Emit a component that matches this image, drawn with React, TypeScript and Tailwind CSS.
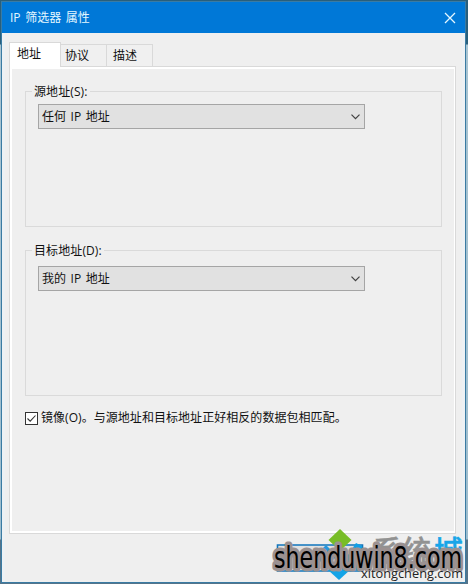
import type { ReactNode } from 'react'
import clsx from 'clsx'

const TABS = [
  { label: '地址', width: 'w-[52px]' },
  { label: '协议', width: 'w-[46px]' },
  { label: '描述', width: 'w-[46px]' },
]

function TitleBar() {
  return (
    <div className="flex h-[31px] shrink-0 items-center justify-between bg-[#0078d7] pr-[9px] pl-[8px] text-[#e4f7ff]">
      <span className="whitespace-pre">IP 筛选器 属性</span>
      <svg width="12" height="12" viewBox="0 0 12 12" stroke="currentColor" strokeWidth="1.3">
        <path d="M1 1L11 11M11 1L1 11" />
      </svg>
    </div>
  )
}

function Tabs() {
  return (
    <div className="flex h-[24px] items-end">
      {TABS.map((tab, i) => (
        <button
          key={tab.label}
          className={clsx(
            'shrink-0 border border-b-0 border-[#d9d9d9] text-left',
            tab.width,
            i === 0 && 'relative z-10 -mb-px h-[25px] bg-[#fff] pb-[2px] pl-[7px]',
            i === 1 && 'h-[22px] border-l-0 bg-[#f0f0f0] pl-[4px]',
            i === 2 && 'h-[22px] border-l-0 bg-[#f0f0f0] pl-[6px]',
          )}
        >
          {tab.label}
        </button>
      ))}
    </div>
  )
}

function Select({ value }: { value: string }) {
  return (
    <button className="flex h-[25px] w-[327px] items-center justify-between border border-[#a5a5a5] bg-[#e1e1e1] pr-[4px] pl-[3px]">
      <span className="[word-spacing:1.5px]">{value}</span>
      <svg width="9" height="6" viewBox="0 0 9 6" fill="none" stroke="#404040" strokeWidth="1.2">
        <path d="M0.5 0.7L4.5 4.7L8.5 0.7" />
      </svg>
    </button>
  )
}

function Group({ label, className, children }: { label: string; className: string; children: ReactNode }) {
  return (
    <section className={clsx('border border-[#dadada] px-[12px]', className)}>
      <div className="-mt-[8px] -ml-[6px] h-[16px] w-fit bg-[#efefef] px-[2px] leading-[16px] tracking-[0.1px]">
        {label}
      </div>
      {children}
    </section>
  )
}

// Site logo and domain stamped over the button row
function Watermark() {
  return (
    <svg className="absolute top-[524px] left-[268px]" width="200" height="60" viewBox="268 524 200 60">
      <path d="M277.5 571V545H362.5V571Z" fill="#e1e1e1" stroke="#1175bd" strokeWidth="1.6" />
      <path d="M326 545L337 556L326 567L315 556Z" fill="#2597dc" />
      <path d="M356 543L362 546V570H338Z" fill="#10a0e6" />
      <path d="M340 529L351.5 540L340 551L328.5 540Z" fill="#78bd27" />
      <path d="M339 559L350 570L339 580L328 570Z" fill="#13a4e7" />
      <g fontFamily='"Noto Sans CJK SC", sans-serif' fontWeight="500" fontSize="29">
        <text x="373" y="562" fill="#929292" stroke="#929292" strokeWidth="0.5">
          系统
        </text>
        <text x="434" y="562" fill="#18a5e8" stroke="#18a5e8" strokeWidth="0.5">
          城
        </text>
      </g>
      <text
        x="274"
        y="568"
        fontFamily='"DejaVu Sans Condensed", "DejaVu Sans", sans-serif'
        fontSize="30"
        textLength="188"
        lengthAdjust="spacingAndGlyphs"
        fill="#000"
        stroke="#9b9191"
        strokeWidth="7"
        strokeLinejoin="round"
        paintOrder="stroke"
      >
        shenduwin8.com
      </text>
      <text
        x="361"
        y="578"
        fontFamily='"Open Sans", sans-serif'
        fontSize="13"
        textLength="102"
        lengthAdjust="spacingAndGlyphs"
        fill="#222"
      >
        xitongcheng.com
      </text>
    </svg>
  )
}

export default function App() {
  return (
    <div className="relative flex h-[584px] w-[468px] flex-col overflow-hidden bg-[linear-gradient(#285f7c_44px,#a8c4d2_45px,#9dbdce_539px,#54748a_540px)] pt-[1px] pr-[2px] pb-[1px] pl-[1px] font-['Open_Sans','Noto_Sans_CJK_SC',sans-serif] text-[12px] leading-[18px] text-[#111] [word-spacing:1.5px]">
      <div className="flex min-h-0 flex-1 flex-col border border-[#3a7ba3] bg-[#efefef]">
        <TitleBar />
        <div className="flex flex-1 flex-col border-x-[3px] border-[#edf1f4] pt-[9px] pr-[6px] pl-[4px]">
          <Tabs />
          <div className="h-[468px] border border-[#d9d9d9]">
            <div className="h-full border-2 border-r-[1px] border-white pt-[22px] pr-[12px] pl-[13px]">
              <Group label="源地址(S):" className="h-[136px]">
                <div className="mt-[4px]">
                  <Select value="任何 IP 地址" />
                </div>
              </Group>
              <Group label="目标地址(D):" className="mt-[23px] h-[146px]">
                <div className="mt-[7px]">
                  <Select value="我的 IP 地址" />
                </div>
              </Group>
              <label className="mt-[12px] flex h-[19px] items-start whitespace-nowrap">
                <span className="mt-[4px] mr-[3px] flex h-[13px] w-[13px] shrink-0 items-center justify-center border border-[#333] bg-white">
                  <svg width="11" height="11" viewBox="0 0 11 11" fill="none" stroke="#333" strokeWidth="1.1">
                    <path d="M1.5 5.5L4.2 8.2L9.5 2.5" />
                  </svg>
                </span>
                <span className="pt-px tracking-[0.05px]">镜像(O)。与源地址和目标地址正好相反的数据包相匹配。</span>
              </label>
            </div>
          </div>
        </div>
      </div>
      <Watermark />
    </div>
  )
}
